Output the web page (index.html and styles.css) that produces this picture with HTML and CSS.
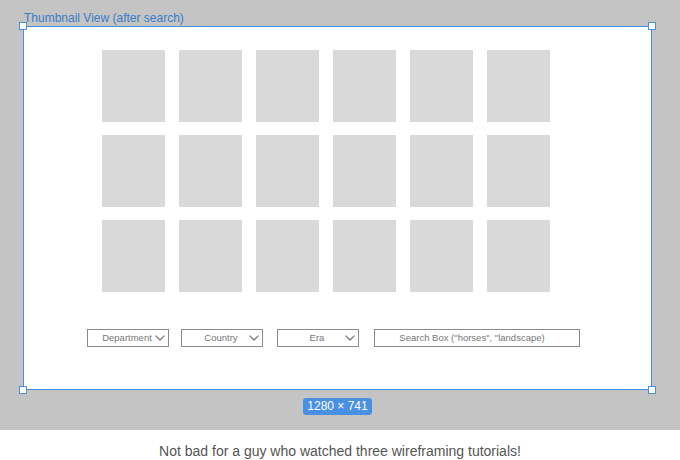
FILE: index.html
```html
<!DOCTYPE html>
<html>
<head>
<meta charset="utf-8">
<link rel="stylesheet" href="styles.css">
</head>
<body>
<div class="stage">
  <div class="title">Thumbnail View (after search)</div>
  <div class="frame">
    <span class="handle tl"></span><span class="handle tr"></span>
    <span class="handle bl"></span><span class="handle br"></span>
    <div class="grid">
      <div class="thumb"></div><div class="thumb"></div><div class="thumb"></div><div class="thumb"></div><div class="thumb"></div><div class="thumb"></div>
      <div class="thumb"></div><div class="thumb"></div><div class="thumb"></div><div class="thumb"></div><div class="thumb"></div><div class="thumb"></div>
      <div class="thumb"></div><div class="thumb"></div><div class="thumb"></div><div class="thumb"></div><div class="thumb"></div><div class="thumb"></div>
    </div>
    <div class="controls">
      <div class="select dept"><span class="label">Department</span><svg class="chev" viewBox="0 0 10 6"><path d="M0.6 0.6 L5 5 L9.4 0.6" /></svg></div>
      <div class="select country"><span class="label">Country</span><svg class="chev" viewBox="0 0 10 6"><path d="M0.6 0.6 L5 5 L9.4 0.6" /></svg></div>
      <div class="select era"><span class="label">Era</span><svg class="chev" viewBox="0 0 10 6"><path d="M0.6 0.6 L5 5 L9.4 0.6" /></svg></div>
      <div class="search">Search Box ("horses", "landscape)</div>
    </div>
  </div>
  <div class="badge-row"><span class="badge">1280 × 741</span></div>
</div>
<div class="caption">Not bad for a guy who watched three wireframing tutorials!</div>
</body>
</html>
```
FILE: styles.css
```css
html, body {
  margin: 0;
  padding: 0;
}
body {
  width: 680px;
  height: 460px;
  overflow: hidden;
  font-family: "Liberation Sans", Arial, sans-serif;
  background: #ffffff;
}
.stage {
  height: 430px;
  background: #c4c4c4;
  padding-top: 11px;
  box-sizing: border-box;
}
.title {
  padding-left: 24px;
  font-size: 12px;
  line-height: 14px;
  color: #3a7cc8;
  margin-bottom: 1px;
}
.frame {
  position: relative;
  margin-left: 23px;
  width: 629px;
  height: 364px;
  box-sizing: border-box;
  border: 1px solid #4a8fdb;
  background: #ffffff;
  padding-top: 23px;
}
.handle {
  position: absolute;
  width: 8px;
  height: 8px;
  box-sizing: border-box;
  border: 1px solid #4a8fdb;
  background: #ffffff;
}
.handle.tl { left: -5px; top: -5px; }
.handle.tr { right: -5px; top: -5px; }
.handle.bl { left: -5px; bottom: -5px; }
.handle.br { right: -5px; bottom: -5px; }
.grid {
  margin-left: 78px;
  display: grid;
  grid-template-columns: repeat(6, 63px);
  grid-auto-rows: 72px;
  column-gap: 14px;
  row-gap: 13px;
}
.thumb {
  background: #d9d9d9;
}
.controls {
  display: flex;
  margin-top: 37px;
  margin-left: 63px;
  height: 18px;
}
.select, .search {
  box-sizing: border-box;
  height: 18px;
  border: 1px solid #8a8a8a;
  font-size: 9.5px;
  color: #777777;
}
.select {
  width: 82px;
  display: flex;
  align-items: center;
  padding: 0 3px 0 11px;
}
.label {
  flex: 1;
  text-align: center;
  line-height: 16px;
}
.chev {
  width: 10px;
  height: 6px;
  fill: none;
  stroke: #7a7a7a;
  stroke-width: 1.3;
}
.country { margin-left: 12px; }
.era { margin-left: 14px; }
.search {
  margin-left: 15px;
  width: 206px;
  line-height: 16px;
  text-align: center;
  padding-right: 10px;
}
.badge-row {
  margin-left: 23px;
  width: 629px;
  display: flex;
  justify-content: center;
  margin-top: 8px;
}
.badge {
  background: #4a90e2;
  color: #ffffff;
  font-size: 12px;
  line-height: 17px;
  padding: 0 4px;
  border-radius: 3px;
}
.caption {
  height: 30px;
  box-sizing: border-box;
  padding-top: 13px;
  text-align: center;
  font-size: 14px;
  line-height: 17px;
  color: #555555;
}
```
